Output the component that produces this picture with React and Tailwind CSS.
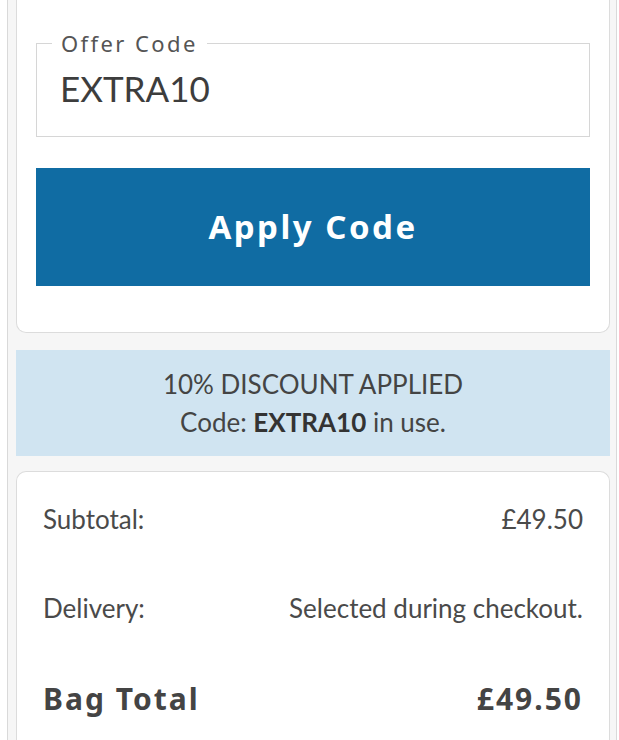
export default function App() {
  return (
    <div className="min-h-[740px] bg-white font-['Lato',sans-serif]">
      <div className="ml-[7px] mr-[2px] min-h-[740px] border-x border-[#d9d9d9] bg-[#f6f6f6] pb-6 pl-2 pr-[6px]">
        <div className="rounded-b-[10px] border-x border-b border-[#dcdcdc] bg-white px-[19px] pb-[46px] pt-[31px]">
          <fieldset className="h-[106px] border border-[#d6d6d6] pl-[15px] pr-4">
            <legend className="px-[9px] font-['Noto_Sans',sans-serif] text-[22px] leading-[24px] tracking-[2.4px] text-[#555]">
              Offer Code
            </legend>
            <div className="pl-[8px] pt-[11px] text-[35px] leading-[44px] text-[#3d3d3d]">EXTRA10</div>
          </fieldset>
          <button className="mt-[31px] flex h-[118px] w-full items-center justify-center bg-[#106ca3] font-['Noto_Sans',sans-serif] text-[33px] font-bold tracking-[2.5px] text-white">
            Apply Code
          </button>
        </div>

        <div className="mt-[17px] flex h-[106px] flex-col items-center justify-center gap-[6px] bg-[#d0e4f1] text-[26px] leading-[32px] text-[#444]">
          <div>10% DISCOUNT APPLIED</div>
          <div>
            Code: <span className="font-bold text-[#333]">EXTRA10</span> in use.
          </div>
        </div>

        <div className="mt-[15px] rounded-t-[10px] border-x border-t border-[#dcdcdc] bg-white px-[26px] pb-8 pt-[30px] text-[#4a4a4a]">
          <div className="flex h-[34px] items-center justify-between text-[26px]">
            <span>Subtotal:</span>
            <span>£49.50</span>
          </div>
          <div className="mt-[55px] flex h-[34px] items-center justify-between text-[26px]">
            <span>Delivery:</span>
            <span>Selected during checkout.</span>
          </div>
          <div className="mt-[56px] flex h-[34px] items-center justify-between font-['Noto_Sans',sans-serif] text-[30px] font-bold tracking-[2px] text-[#444]">
            <span>Bag Total</span>
            <span>£49.50</span>
          </div>
        </div>
      </div>
    </div>
  );
}
